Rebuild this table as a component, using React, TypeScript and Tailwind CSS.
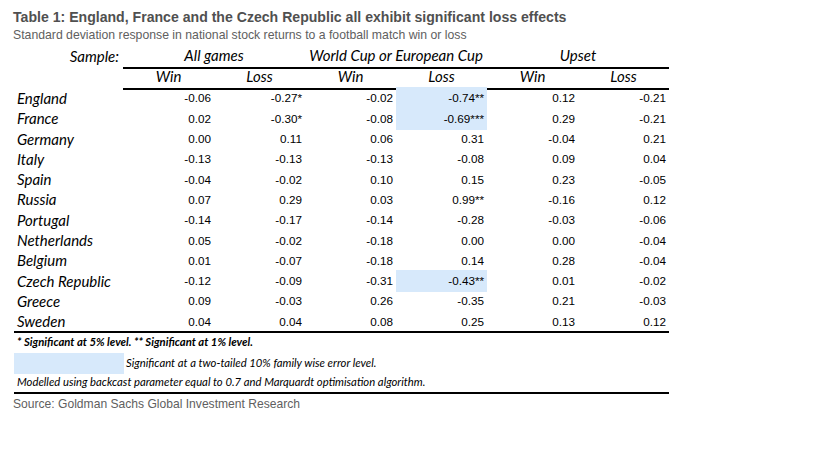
import React from "react";

type Row = { name: string; v: string[]; hl?: number[] };

const rows: Row[] = [
  { name: "England", v: ["-0.06", "-0.27*", "-0.02", "-0.74**", "0.12", "-0.21"], hl: [3] },
  { name: "France", v: ["0.02", "-0.30*", "-0.08", "-0.69***", "0.29", "-0.21"], hl: [3] },
  { name: "Germany", v: ["0.00", "0.11", "0.06", "0.31", "-0.04", "0.21"] },
  { name: "Italy", v: ["-0.13", "-0.13", "-0.13", "-0.08", "0.09", "0.04"] },
  { name: "Spain", v: ["-0.04", "-0.02", "0.10", "0.15", "0.23", "-0.05"] },
  { name: "Russia", v: ["0.07", "0.29", "0.03", "0.99**", "-0.16", "0.12"] },
  { name: "Portugal", v: ["-0.14", "-0.17", "-0.14", "-0.28", "-0.03", "-0.06"] },
  { name: "Netherlands", v: ["0.05", "-0.02", "-0.18", "0.00", "0.00", "-0.04"] },
  { name: "Belgium", v: ["0.01", "-0.07", "-0.18", "0.14", "0.28", "-0.04"] },
  { name: "Czech Republic", v: ["-0.12", "-0.09", "-0.31", "-0.43**", "0.01", "-0.02"], hl: [3] },
  { name: "Greece", v: ["0.09", "-0.03", "0.26", "-0.35", "0.21", "-0.03"] },
  { name: "Sweden", v: ["0.04", "0.04", "0.08", "0.25", "0.13", "0.12"] },
];

const cal = { fontFamily: "Lato, 'Open Sans', sans-serif" };
const arial = { fontFamily: "'Liberation Sans', Arial, sans-serif" };

export default function App() {
  return (
    <div className="w-[819px] h-[460px] bg-white pl-[13px] pt-[9px]" style={arial}>
      <div className="text-[14.1px] leading-[16px] font-bold text-[#505050]">
        Table 1: England, France and the Czech Republic all exhibit significant loss effects
      </div>
      <div className="text-[12.25px] leading-[16px] text-[#606060] mt-[2px]">
        Standard deviation response in national stock returns to a football match win or loss
      </div>
      <div className="ml-[1px] w-[655px] mt-[1px] text-black">
        <div className="grid grid-cols-[109px_182px_182px_182px] h-[21px] items-center italic text-[15px]" style={cal}>
          <div className="text-right pr-[4px] h-full flex items-center justify-end">Sample:</div>
          <div className="h-full flex items-center justify-center border-b-2 border-black">All games</div>
          <div className="h-full flex items-center justify-center border-b-2 border-black">World Cup or European Cup</div>
          <div className="h-full flex items-center justify-center border-b-2 border-black">Upset</div>
        </div>
        <div className="grid grid-cols-[109px_repeat(6,91px)] h-[22px] italic text-[15px]" style={cal}>
          <div />
          {["Win", "Loss", "Win", "Loss", "Win", "Loss"].map((t, i) => (
            <div key={i} className="flex items-center justify-center border-b-2 border-black">
              {t}
            </div>
          ))}
        </div>
        {rows.map((r, ri) => (
          <div
            key={r.name}
            className={
              "grid grid-cols-[109px_repeat(6,91px)] h-[20.3px] " +
              (ri === rows.length - 1 ? "border-b-2 border-black box-content" : "")
            }
          >
            <div className="italic text-[15px] pl-[3px] flex items-center" style={cal}>
              {r.name}
            </div>
            {r.v.map((v, i) => (
              <div
                key={i}
                className={
                  "flex items-center justify-end pr-[3px] text-[11.7px] " +
                  (r.hl && r.hl.includes(i) ? "bg-[#d7e9fb]" : "")
                }
                style={arial}
              >
                {v}
              </div>
            ))}
          </div>
        ))}
        <div className="italic text-[11.3px] border-b-2 border-black" style={cal}>
          <div className="h-[20px] flex items-center pl-[3px] font-bold">
            * Significant at 5% level. ** Significant at 1% level.
          </div>
          <div className="h-[21px] flex items-center">
            <div className="w-[110px] h-full bg-[#d7e9fb]" />
            <div className="pl-[2px]">Significant at a two-tailed 10% family wise error level.</div>
          </div>
          <div className="h-[18px] flex items-center pl-[3px]">
            Modelled using backcast parameter equal to 0.7 and Marquardt optimisation algorithm.
          </div>
        </div>
      </div>
      <div className="text-[12.1px] leading-[16px] text-[#606060] mt-[2px]">
        Source: Goldman Sachs Global Investment Research
      </div>
    </div>
  );
}
